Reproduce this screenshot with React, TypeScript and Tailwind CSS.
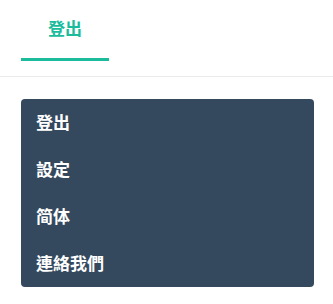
const items = ["登出", "設定", "简体", "連絡我們"];

export default function App() {
  return (
    <div className="w-[333px] h-[304px] bg-white font-['Noto_Sans_CJK_TC','Noto_Sans_CJK_SC',sans-serif]">
      <div className="h-[77px] border-b border-[#ebebeb] pl-[21px]">
        <div className="w-[88px] h-[61px] flex flex-col items-center">
          <div className="flex-1 flex items-center pb-[3px] text-[17px] font-bold text-[#1abc9c]">登出</div>
          <div className="w-full h-[3px] bg-[#1abc9c]" />
        </div>
      </div>
      <ul className="mt-[22px] ml-[21px] w-[293px] rounded-[4px] bg-[#34495e]">
        {items.map((item) => (
          <li key={item} className="h-[47px] flex items-center pl-[15px] pb-[1px] text-[17px] font-bold text-white">
            {item}
          </li>
        ))}
      </ul>
    </div>
  );
}
